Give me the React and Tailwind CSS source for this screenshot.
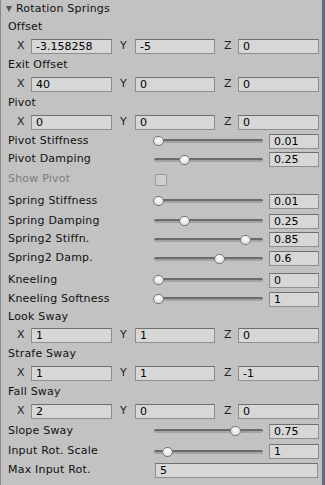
import React from "react";

const font = { fontFamily: '"DejaVu Sans", Verdana, sans-serif' };

function Field({ value, className = "" }) {
    return (
        <div className={"h-[15px] bg-[#d7d7d7] border border-[#8e8e8e] border-t-[#6f6f6f] flex items-center pl-[4px] text-[11px] leading-none text-black " + className}>
            {value}
        </div>
    );
}

function Label({ h, text, muted }) {
    return (
        <div className={`${h} flex items-center pl-[8px] text-[11px] tracking-[0.2px] ${muted ? "text-[#7c7c7c]" : "text-[#111]"}`}>
            {text}
        </div>
    );
}

function Vector({ h, x, y, z }) {
    return (
        <div className={`${h} flex items-center text-[11px] text-[#222]`}>
            <div className="w-[31px] pl-[17px]">X</div>
            <Field value={x} className="w-[81px]" />
            <div className="w-[23px] pl-[8px]">Y</div>
            <Field value={y} className="w-[80px]" />
            <div className="w-[23px] pl-[9px]">Z</div>
            <Field value={z} className="w-[81px]" />
        </div>
    );
}

function Slider({ h, label, value, pos, className = "" }) {
    return (
        <div className={`${h} flex items-center ${className}`}>
            <div className="w-[153px] pl-[8px] text-[11px] tracking-[0.2px] text-[#111]">{label}</div>
            <div className="relative w-[110px] h-[12px]">
                <div className="absolute left-[1px] right-0 top-[4px] h-[4px] rounded-full bg-[#a3a3a3] border-t-2 border-[#6a6a6a]" />
                <div
                    className="absolute top-[1px] w-[11px] h-[10px] rounded-full border border-[#7a7a7a] bg-[radial-gradient(circle_at_50%_35%,#ffffff,#e4e4e4_60%,#c4c4c4)]"
                    style={{ left: pos * 102 }}
                />
            </div>
            <Field value={value} className="ml-[6px] w-[50px]" />
        </div>
    );
}

export default function App() {
    return (
        <div className="w-[325px] h-[485px] bg-[#c2c2c2] flex" style={font}>
            <div className="w-[1px] bg-[#8a8a8a]" />
            <div className="flex-1 flex flex-col -ml-[1px]">
                <div className="h-[18px] flex items-center text-[11px] tracking-[0.2px] text-[#111]">
                    <svg width="6" height="6" viewBox="0 0 6 6" className="ml-[6px] mr-[4px]">
                        <polygon points="0,0 6,0 3,6" fill="#555" />
                    </svg>
                    Rotation Springs
                </div>
                <Label h="h-[18px]" text="Offset" />
                <Vector h="h-[20px]" x="-3.158258" y="-5" z="0" />
                <Label h="h-[18px]" text="Exit Offset" />
                <Vector h="h-[20px]" x="40" y="0" z="0" />
                <Label h="h-[18px]" text="Pivot" />
                <Vector h="h-[20px]" x="0" y="0" z="0" />
                <Slider h="h-[18px]" label="Pivot Stiffness" value="0.01" pos={0} />
                <Slider h="h-[19px]" label="Pivot Damping" value="0.25" pos={0.25} />
                <div className="h-[21px] flex items-center">
                    <div className="w-[155px] pl-[8px] text-[11px] tracking-[0.2px] text-[#7c7c7c]">Show Pivot</div>
                    <div className="w-[12px] h-[12px] border border-[#9a9a9a] bg-[#cecece] rounded-[1px]" />
                </div>
                <Slider h="h-[22px]" label="Spring Stiffness" value="0.01" pos={0} />
                <Slider h="h-[18px]" label="Spring Damping" value="0.25" pos={0.25} />
                <Slider h="h-[19px]" label="Spring2 Stiffn." value="0.85" pos={0.85} />
                <Slider h="h-[19px]" label="Spring2 Damp." value="0.6" pos={0.6} />
                <Slider h="h-[20px]" label="Kneeling" value="0" pos={0} className="mt-[2px]" />
                <Slider h="h-[18px]" label="Kneeling Softness" value="1" pos={0} />
                <Label h="h-[18px]" text="Look Sway" />
                <Vector h="h-[19px]" x="1" y="1" z="0" />
                <Label h="h-[18px]" text="Strafe Sway" />
                <Vector h="h-[20px]" x="1" y="1" z="-1" />
                <Label h="h-[18px]" text="Fall Sway" />
                <Vector h="h-[20px]" x="2" y="0" z="0" />
                <Slider h="h-[20px]" label="Slope Sway" value="0.75" pos={0.75} />
                <Slider h="h-[21px]" label="Input Rot. Scale" value="1" pos={0.088} />
                <div className="h-[16px] flex items-center">
                    <div className="w-[155px] pl-[8px] text-[11px] tracking-[0.2px] text-[#111]">Max Input Rot.</div>
                    <Field value="5" className="w-[163px]" />
                </div>
            </div>
            <div className="w-[3px] bg-[#5f6d82]" />
        </div>
    );
}
